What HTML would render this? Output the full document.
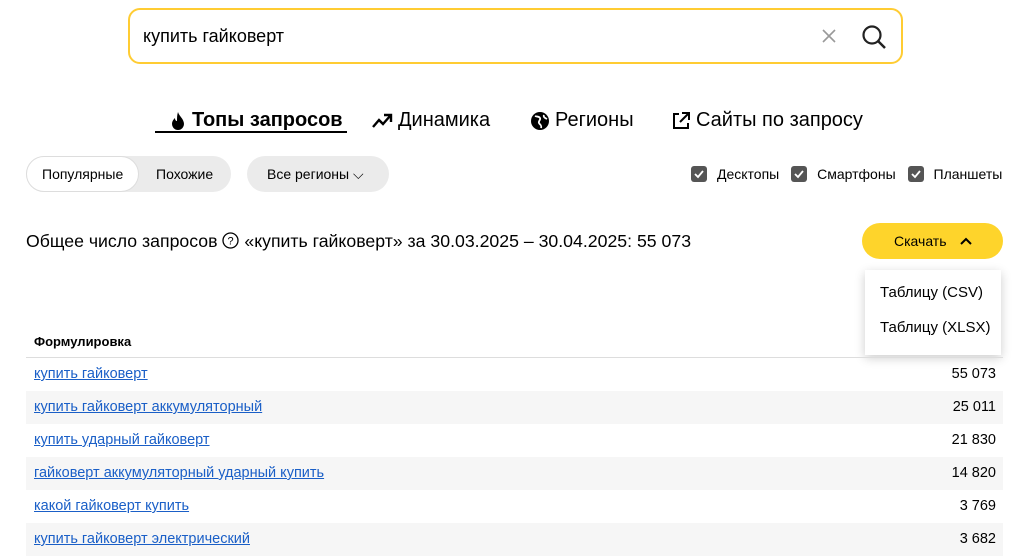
<!DOCTYPE html>
<html><head><meta charset="utf-8"><style>
*{margin:0;padding:0;box-sizing:border-box}
body{width:1024px;height:560px;overflow:hidden;background:#fff;font-family:"Liberation Sans",sans-serif;color:#000;position:relative}
.abs{position:absolute}
.search{left:128px;top:8px;width:775px;height:56px;border:2px solid #fc3;border-radius:12px}
.search .q{position:absolute;left:13px;top:16px;font-size:18px}
.tabs{top:109px;font-size:20px;white-space:nowrap}
.tab{position:absolute;top:0;display:flex;align-items:center;gap:5px}
.pill{top:156px;height:36px;background:#ebebeb;border-radius:18px;font-size:14px}
.row{left:26px;width:977px;height:33px;font-size:14.5px}
.row a{position:absolute;left:8px;top:8px;color:#1a5fc7;text-decoration:underline}
.row span{position:absolute;right:7px;top:8px}
.cb{display:inline-block;width:16px;height:16px;background:#555;border-radius:3px;vertical-align:-3px;margin-right:10px;position:relative}
</style></head><body>
<div class="abs search"><div class="q">купить гайковерт</div>
<svg class="abs" style="left:691px;top:18px" width="16" height="16" viewBox="0 0 16 16"><path d="M2 2L14 14M14 2L2 14" stroke="#999" stroke-width="1.6"/></svg>
<svg class="abs" style="left:731px;top:14px" width="26" height="26" viewBox="0 0 26 26"><circle cx="11" cy="11" r="8.5" fill="none" stroke="#222" stroke-width="2.2"/><path d="M17 17L24 24" stroke="#222" stroke-width="2.5"/></svg>
</div>
<div class="abs tabs" style="left:0;width:1024px;height:30px">
<div class="tab" style="left:169px;font-weight:bold"><svg width="18" height="20" viewBox="0 0 18 20"><path d="M9 1C10 5 15 8 15 13a6 6 0 0 1-12 0c0-3 2-5 3-6 0 2 1 3 2 3C8 7 8 4 9 1z" fill="#000"/></svg>Топы запросов</div>
<div class="tab" style="left:371px"><svg width="22" height="18" viewBox="0 0 22 18"><path d="M2 15L8 8l4 4 7-8M13 3h7v7" stroke="#000" stroke-width="2.4" fill="none"/></svg>Динамика</div>
<div class="tab" style="left:530px"><svg width="20" height="20" viewBox="0 0 20 20"><circle cx="10" cy="10" r="9" fill="#000"/><path d="M5 5c2 1 4 0 5 2s-2 3-1 5 3 2 2 5M14 4c-1 2 1 3 3 4" stroke="#fff" stroke-width="1.8" fill="none"/></svg>Регионы</div>
<div class="tab" style="left:671px"><svg width="20" height="20" viewBox="0 0 20 20"><path d="M8 3H3v14h14v-5M11 2h7v7M18 2l-9 9" stroke="#000" stroke-width="2" fill="none"/></svg>Сайты по запросу</div>
</div>
<div class="abs" style="left:155px;top:131px;width:192px;height:2px;background:#000"></div>
<div class="abs pill" style="left:26px;width:205px"><div class="abs" style="left:0;top:0;width:113px;height:36px;background:#fff;border:1px solid #ddd;border-radius:18px"></div>
<div class="abs" style="left:16px;top:10px">Популярные</div><div class="abs" style="left:130px;top:10px">Похожие</div></div>
<div class="abs pill" style="left:247px;width:142px"><div class="abs" style="left:20px;top:10px">Все регионы ⌵</div></div>
<div class="abs" style="left:691px;top:166px;font-size:14px;white-space:nowrap">
<span class="cb"><svg class="abs" style="left:3px;top:3px" width="10" height="10"><path d="M1 5l3 3 5-6" stroke="#fff" stroke-width="1.8" fill="none"/></svg></span>Десктопы
<span class="cb" style="margin-left:8px"><svg class="abs" style="left:3px;top:3px" width="10" height="10"><path d="M1 5l3 3 5-6" stroke="#fff" stroke-width="1.8" fill="none"/></svg></span>Смартфоны
<span class="cb" style="margin-left:8px"><svg class="abs" style="left:3px;top:3px" width="10" height="10"><path d="M1 5l3 3 5-6" stroke="#fff" stroke-width="1.8" fill="none"/></svg></span>Планшеты</div>
<div class="abs" style="left:26px;top:231px;font-size:17.7px;white-space:nowrap">Общее число запросов <svg width="17" height="17" viewBox="0 0 17 17" style="vertical-align:-2px"><circle cx="8.5" cy="8.5" r="7.5" fill="none" stroke="#000" stroke-width="1.3"/><text x="8.5" y="12.5" font-size="11" text-anchor="middle" font-family="Liberation Sans">?</text></svg> «купить гайковерт» за 30.03.2025 – 30.04.2025: 55 073</div>
<div class="abs" style="left:862px;top:223px;width:141px;height:36px;background:#fed42b;border-radius:18px;font-size:14px"><span class="abs" style="left:32px;top:10px">Скачать</span><svg class="abs" style="left:97px;top:13px" width="14" height="10"><path d="M2 8l5-5 5 5" stroke="#000" stroke-width="2" fill="none"/></svg></div>
<div class="abs" style="left:865px;top:270px;width:136px;height:85px;background:#fff;box-shadow:0 3px 10px rgba(0,0,0,.2);font-size:15px">
<div class="abs" style="left:15px;top:14px">Таблицу (CSV)</div><div class="abs" style="left:15px;top:49px">Таблицу (XLSX)</div></div>
<div class="abs" style="left:34px;top:334px;font-size:13px;font-weight:bold">Формулировка</div>
<div class="abs" style="left:26px;top:357px;width:977px;height:1px;background:#ddd"></div>
<div class="abs row" style="top:358px"><a>купить гайковерт</a><span>55 073</span></div>
<div class="abs row" style="top:391px;background:#f6f6f6"><a>купить гайковерт аккумуляторный</a><span>25 011</span></div>
<div class="abs row" style="top:424px"><a>купить ударный гайковерт</a><span>21 830</span></div>
<div class="abs row" style="top:457px;background:#f6f6f6"><a>гайковерт аккумуляторный ударный купить</a><span>14 820</span></div>
<div class="abs row" style="top:490px"><a>какой гайковерт купить</a><span>3 769</span></div>
<div class="abs row" style="top:523px;background:#f6f6f6"><a>купить гайковерт электрический</a><span>3 682</span></div>
</body></html>
